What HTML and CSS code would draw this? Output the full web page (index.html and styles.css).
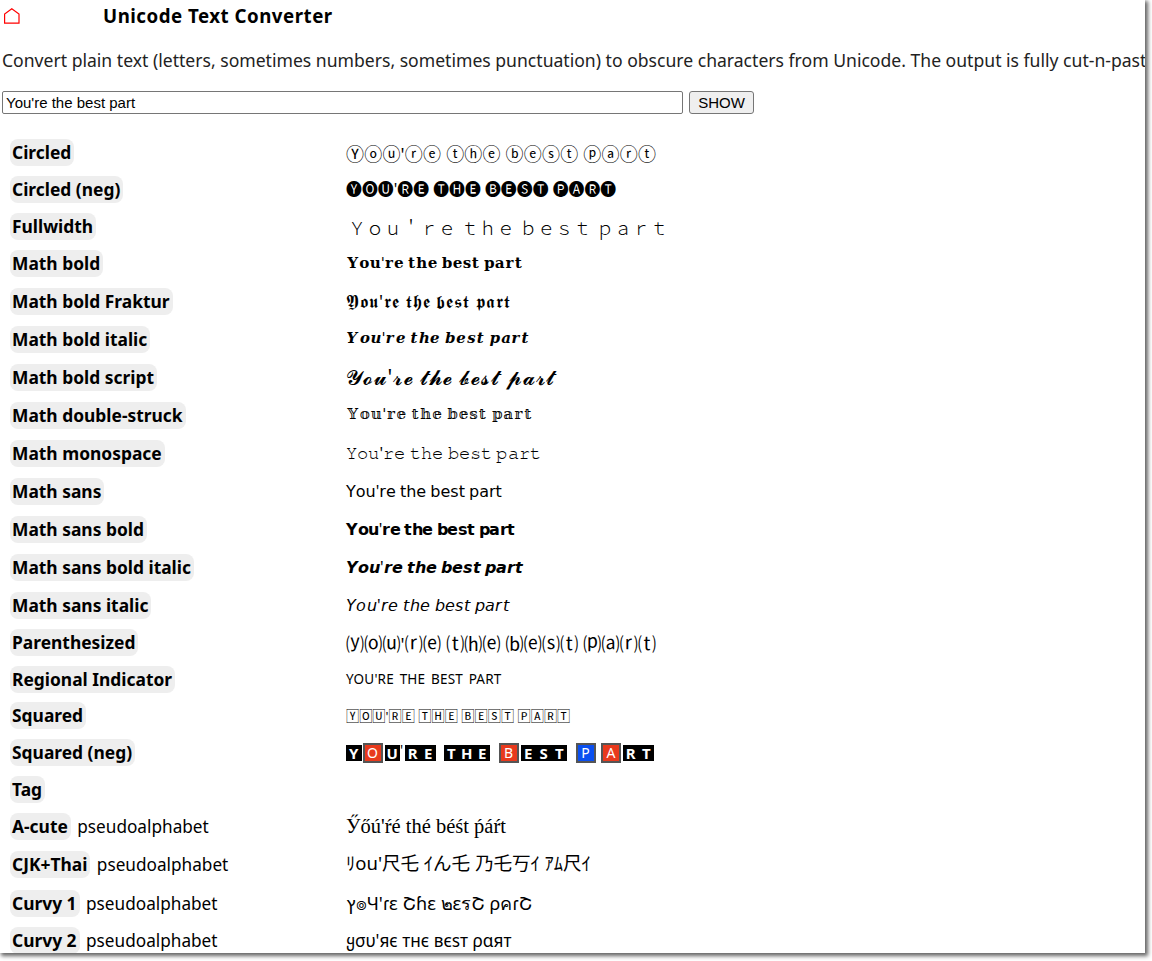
FILE: index.html
```html
<!DOCTYPE html>
<html lang="en">
<head>
<meta charset="utf-8">
<title>Unicode Text Converter</title>
<link rel="stylesheet" href="styles.css">
</head>
<body>
<div class="frame">
  <header class="top">
    <svg class="home" viewBox="0 0 16 16" width="16" height="16"><path d="M.6 15.2V6L7.8 .8 15 6V15.2Z" fill="none" stroke="#f00" stroke-width="1.2"/></svg>
    <h1 class="title">Unicode Text Converter</h1>
  </header>
  <p class="intro">Convert plain text (letters, sometimes numbers, sometimes punctuation) to obscure characters from Unicode. The output is fully cut-n-pasteable text.</p>
  <form class="controls">
    <input class="field" type="text" value="You're the best part">
    <button class="show" type="button">SHOW</button>
  </form>
  <div class="list">
    <div class="row r37"><span class="name"><b class="tag">Circled</b></span><span class="out big">Ⓨⓞⓤ'ⓡⓔ ⓣⓗⓔ ⓑⓔⓢⓣ ⓟⓐⓡⓣ</span></div>
    <div class="row r37"><span class="name"><b class="tag">Circled (neg)</b></span><span class="out negc">🅨🅞🅤'🅡🅔 🅣🅗🅔 🅑🅔🅢🅣 🅟🅐🅡🅣</span></div>
    <div class="row r37"><span class="name"><b class="tag">Fullwidth</b></span><span class="out full">Ｙｏｕ＇ｒｅ ｔｈｅ ｂｅｓｔ ｐａｒｔ</span></div>
    <div class="row r37"><span class="name"><b class="tag">Math bold</b></span><span class="out m-bold">𝐘𝐨𝐮'𝐫𝐞 𝐭𝐡𝐞 𝐛𝐞𝐬𝐭 𝐩𝐚𝐫𝐭</span></div>
    <div class="row r38"><span class="name"><b class="tag">Math bold Fraktur</b></span><span class="out m-frak">𝖄𝖔𝖚'𝖗𝖊 𝖙𝖍𝖊 𝖇𝖊𝖘𝖙 𝖕𝖆𝖗𝖙</span></div>
    <div class="row r38"><span class="name"><b class="tag">Math bold italic</b></span><span class="out m-ital">𝒀𝒐𝒖'𝒓𝒆 𝒕𝒉𝒆 𝒃𝒆𝒔𝒕 𝒑𝒂𝒓𝒕</span></div>
    <div class="row r38"><span class="name"><b class="tag">Math bold script</b></span><span class="out m-script">𝓨𝓸𝓾'𝓻𝓮 𝓽𝓱𝓮 𝓫𝓮𝓼𝓽 𝓹𝓪𝓻𝓽</span></div>
    <div class="row r38"><span class="name"><b class="tag">Math double-struck</b></span><span class="out m-double">𝕐𝕠𝕦'𝕣𝕖 𝕥𝕙𝕖 𝕓𝕖𝕤𝕥 𝕡𝕒𝕣𝕥</span></div>
    <div class="row r38"><span class="name"><b class="tag">Math monospace</b></span><span class="out m-mono">𝚈𝚘𝚞'𝚛𝚎 𝚝𝚑𝚎 𝚋𝚎𝚜𝚝 𝚙𝚊𝚛𝚝</span></div>
    <div class="row r38"><span class="name"><b class="tag">Math sans</b></span><span class="out">𝖸𝗈𝗎'𝗋𝖾 𝗍𝗁𝖾 𝖻𝖾𝗌𝗍 𝗉𝖺𝗋𝗍</span></div>
    <div class="row r38"><span class="name"><b class="tag">Math sans bold</b></span><span class="out m-sansb">𝗬𝗼𝘂'𝗿𝗲 𝘁𝗵𝗲 𝗯𝗲𝘀𝘁 𝗽𝗮𝗿𝘁</span></div>
    <div class="row r38"><span class="name"><b class="tag">Math sans bold italic</b></span><span class="out">𝙔𝙤𝙪'𝙧𝙚 𝙩𝙝𝙚 𝙗𝙚𝙨𝙩 𝙥𝙖𝙧𝙩</span></div>
    <div class="row r38"><span class="name"><b class="tag">Math sans italic</b></span><span class="out m-sansi">𝘠𝘰𝘶'𝘳𝘦 𝘵𝘩𝘦 𝘣𝘦𝘴𝘵 𝘱𝘢𝘳𝘵</span></div>
    <div class="row r37"><span class="name"><b class="tag">Parenthesized</b></span><span class="out big">⒴⒪⒰'⒭⒠ ⒯⒣⒠ ⒝⒠⒮⒯ ⒫⒜⒭⒯</span></div>
    <div class="row r36"><span class="name"><b class="tag">Regional Indicator</b></span><span class="out regional">YOU'RE THE BEST PART</span></div>
    <div class="row r37"><span class="name"><b class="tag">Squared</b></span><span class="out squared">🅈🄾🅄'🅁🄴 🅃🄷🄴 🄱🄴🅂🅃 🄿🄰🅁🅃</span></div>
    <div class="row r37"><span class="name"><b class="tag">Squared (neg)</b></span>
      <span class="neg"><i class="sq">Y</i><i class="sq red">O</i><i class="sq">U</i><i class="apos">'</i><i class="sq">R</i><i class="sq">E</i><i class="gap"></i><i class="sq">T</i><i class="sq">H</i><i class="sq">E</i><i class="gap"></i><i class="sq red">B</i><i class="sq">E</i><i class="sq">S</i><i class="sq">T</i><i class="gap"></i><i class="sq blue">P</i><i class="sq red">A</i><i class="sq">R</i><i class="sq">T</i></span></div>
    <div class="row r36"><span class="name"><b class="tag">Tag</b></span><span class="out"></span></div>
    <div class="row r38"><span class="name"><b class="tag">A-cute</b> pseudoalphabet</span><span class="out acute">Ӳőú'ŕé thé béśt ṕáŕt</span></div>
    <div class="row r39"><span class="name"><b class="tag">CJK+Thai</b> pseudoalphabet</span><span class="out cjk">ﾘou'尺乇 ｲん乇 乃乇丂ｲ ｱﾑ尺ｲ</span></div>
    <div class="row r38"><span class="name"><b class="tag">Curvy 1</b> pseudoalphabet</span><span class="out curvy1">ץ๏Ч'ɾɛ Շɦɛ ๒ɛรՇ ρคɾՇ</span></div>
    <div class="row r37"><span class="name"><b class="tag">Curvy 2</b> pseudoalphabet</span><span class="out curvy2">ყσυ'яє тнє вєѕт ραят</span></div>
  </div>
</div>
</body>
</html>
```
FILE: styles.css
```css
* { box-sizing: border-box; }
html, body { margin: 0; padding: 0; background: #fff; }
body {
  width: 1152px;
  height: 961px;
  overflow: hidden;
  font-family: "Noto Sans", "Noto Sans CJK KR", "DejaVu Sans", sans-serif;
  color: #000;
}
.frame {
  width: 1145px;
  height: 953px;
  overflow: hidden;
  box-shadow: 2px 2px 4px 1px #666;
  background: #fff;
}
.top {
  display: flex;
  align-items: center;
  height: 32px;
  padding-left: 4px;
}
.home { flex: none; }
.title {
  margin: -2px 0 0 83px;
  font-size: 18.7px;
  font-weight: 700;
  letter-spacing: .5px;
  white-space: nowrap;
}
.intro {
  margin: 16px 0 0 2px;
  font-size: 17.58px;
  line-height: 24px;
  white-space: nowrap;
  color: #222;
}
.controls {
  display: flex;
  align-items: center;
  margin: 19px 0 0 2px;
  gap: 6px;
}
.field {
  width: 681px;
  height: 23px;
  padding: 1px 3px;
  font: 15px "Liberation Sans", sans-serif;
  border: 1px solid #767676;
  border-radius: 2px;
  background: #fff;
  color: #000;
}
.show {
  width: 65px;
  height: 23px;
  padding: 0;
  font: 15px "Liberation Sans", sans-serif;
  border: 1px solid #767676;
  border-radius: 3px;
  background: #efefef;
  color: #000;
}
.list { margin-top: 20px; padding-left: 10px; }
.row { display: flex; align-items: center; white-space: nowrap; }
.r36 { height: 36px; }
.r37 { height: 37px; }
.r38 { height: 38px; }
.r39 { height: 39px; }
.name { width: 336px; flex: none; font-size: 17.2px; }
.tag {
  display: inline-block;
  padding: 2px 3px 3px 2px;
  margin-right: 2px;
  background: #eee;
  border-radius: 8px;
  font-size: 17.4px;
  line-height: 22px;
}
.out { font-size: 16px; }
.big { font-size: 18px; letter-spacing: .2px; }
.negc { font-size: 15.9px; margin-top: -2px; }
.full { font-size: 18px; margin-left: 2px; font-weight: 300; }
.m-bold, .m-ital, .m-double { font-family: "DejaVu Math TeX Gyre", "DejaVu Serif", "DejaVu Sans", serif; font-size: 15px; }
.m-bold { letter-spacing: -.75px; }
.m-frak { font-size: 18px; letter-spacing: 1px; }
.m-ital { letter-spacing: -.35px; }
.m-script { font-size: 21px; letter-spacing: .8px; }
.m-double { letter-spacing: -.25px; }
.m-mono { font-size: 16px; letter-spacing: .15px; }
.m-sansb { letter-spacing: -.4px; }
.m-sansi { letter-spacing: .35px; }
.regional { font-size: 13.5px; letter-spacing: .2px; word-spacing: 2px; }
.squared { font-size: 13.2px; }
.neg { display: inline-flex; align-items: center; height: 20px; }
.neg i { font-style: normal; }
.sq {
  display: flex;
  align-items: center;
  justify-content: center;
  width: 15.5px;
  height: 16px;
  background: #000;
  color: #fff;
  font-size: 15px;
  font-weight: 700;
}
.apos { width: 5px; font-size: 14px; line-height: 14px; align-self: flex-start; }
.gap { width: 7.5px; }
.red, .blue {
  width: 20px;
  height: 20px;
  margin: 0 2px 0 1px;
  border: 2px solid #555;
  font-size: 14px;
  font-weight: 400;
}
.red { background: #e8391c; }
.blue { background: #0a4ff0; margin-right: 4.5px; }
.acute { font-family: "Liberation Serif", "DejaVu Serif", serif; font-size: 20.5px; }
.cjk { font-size: 18.5px; margin-top: -5px; }
.curvy1 { font-size: 18px; }
.curvy2 { font-size: 17.2px; margin-top: -1px; }
```
